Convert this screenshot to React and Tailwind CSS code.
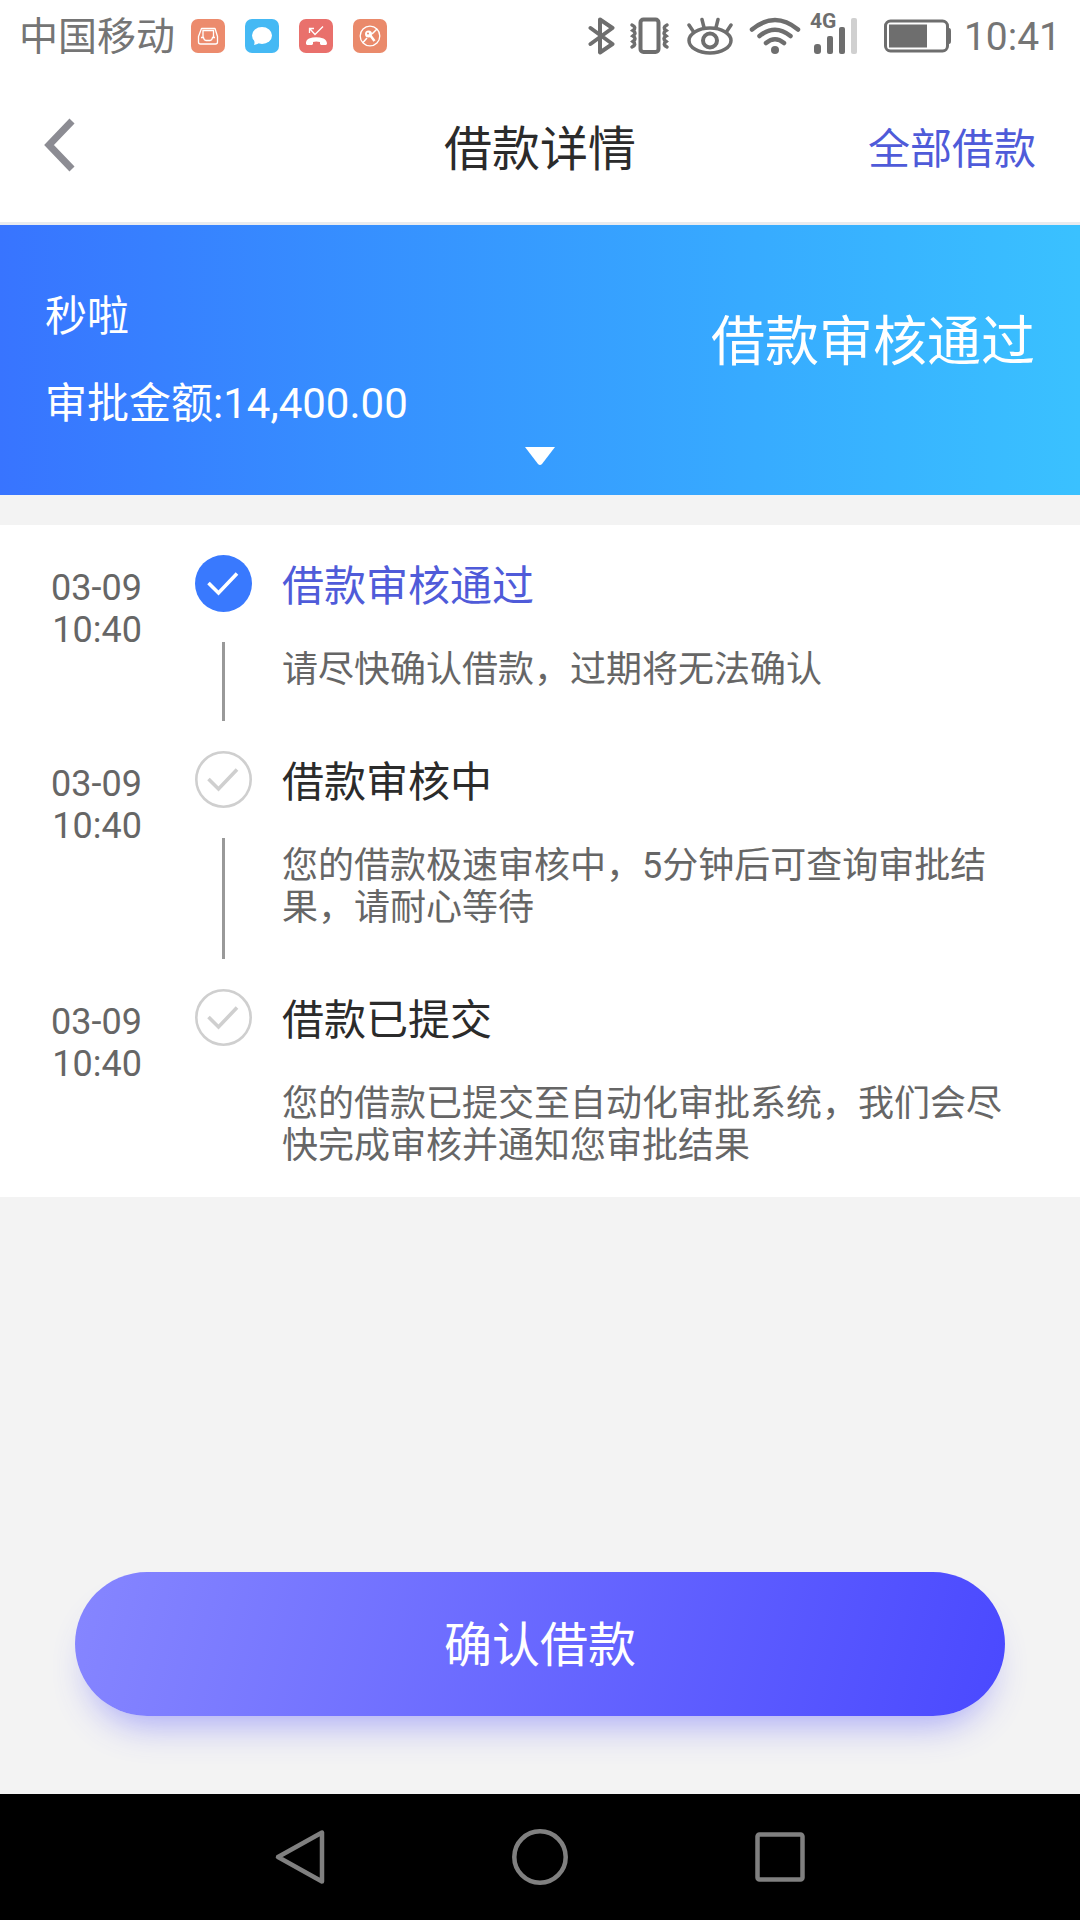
const steps = [
  {
    date: "03-09",
    time: "10:40",
    title: "借款审核通过",
    text: "请尽快确认借款，过期将无法确认",
    active: true,
  },
  {
    date: "03-09",
    time: "10:40",
    title: "借款审核中",
    text: "您的借款极速审核中，5分钟后可查询审批结果，请耐心等待",
  },
  {
    date: "03-09",
    time: "10:40",
    title: "借款已提交",
    text: "您的借款已提交至自动化审批系统，我们会尽快完成审核并通知您审批结果",
  },
];

function NoticeIcons() {
  return (
    <div className="ml-4 flex gap-5">
      {/* Inbox */}
      <svg width="34" height="34" viewBox="0 0 34 34" fill="none">
        <rect width="34" height="34" rx="7" fill="#ec8b6d" />
        <path d="M10.5 9.500h13.500l2.500 8v5.500q0 2-2 2h-15q-2 0-2-2v-5.500z" stroke="#fff" strokeWidth="1.3" strokeLinejoin="round" />
        <path d="M12 18v-6.500h10.500V18M10 18.500h2.500q.5 3 2.500 3h4q2 0 2.500-3H24" stroke="#fff" strokeWidth="1.3" />
      </svg>
      {/* Message */}
      <svg width="34" height="34" viewBox="0 0 34 34">
        <rect width="34" height="34" rx="7" fill="#45b9f4" />
        <ellipse cx="17" cy="16.5" rx="10" ry="8.5" fill="#fff" />
        <path d="M9 20q1 4 0 6 4-.5 6-3z" fill="#fff" />
      </svg>
      {/* Missed call */}
      <svg width="34" height="34" viewBox="0 0 34 34" fill="none">
        <rect width="34" height="34" rx="7" fill="#e9706c" />
        <path d="M10.5 14V9.500H15M11 10l5 5.500 8-8" stroke="#fff" strokeWidth="1.3" />
        <path d="M7 25q-.5-4 3-5.500 7-2.500 14.500 0 3.500 1.500 3.500 5.500l-1 1h-5l-1-1v-2q-4-1.200-7 0v2l-1 1H8z" fill="#fff" />
      </svg>
      {/* Blocked */}
      <svg width="34" height="34" viewBox="0 0 34 34" fill="none">
        <rect width="34" height="34" rx="7" fill="#ea8a6b" />
        <circle cx="17" cy="17" r="9.8" stroke="#fff" strokeWidth="1.3" />
        <circle cx="15.5" cy="15" r="3.5" fill="#fff" />
        <path d="M17 16l4.500 6" stroke="#fff" strokeWidth="2.5" />
        <path d="M24 10l-5 5M14 19l-4 4.500" stroke="#fff" strokeWidth="1.5" />
        <circle cx="15" cy="14.5" r="1" fill="#ea8a6b" />
      </svg>
    </div>
  );
}

function StatusBar() {
  return (
    <div className="flex h-[72px] items-center px-[19px] text-[39px] leading-[44px] text-[#757575]">
      <span className="pt-px">中国移动</span>
      <NoticeIcons />
      <div className="ml-auto flex items-center">
        {/* Bluetooth */}
        <svg width="28" height="38" viewBox="0 0 28 38" fill="none" stroke="#6e6e6e" strokeWidth="4" strokeLinecap="round" strokeLinejoin="round">
          <path d="M2.5 11l22 16L12 35.500V2.500L24.500 11l-22 16" />
        </svg>
        {/* Vibrate */}
        <svg className="ml-[13px]" width="42" height="38" viewBox="0 0 42 38" fill="none" stroke="#6e6e6e" strokeLinecap="round">
          <rect x="11.5" y="2.5" width="18" height="32.5" rx="3" strokeWidth="4" />
          <path d="M3 8q5 2.500 1 5.500q4 2.500 0 5.500q4 2.500 0 5.500q4 3-1 5.500M38 8q-5 2.500-1 5.500q-4 2.500 0 5.500q-4 2.500 0 5.500q-4 3 1 5.500" strokeWidth="3.5" />
        </svg>
        {/* Eye comfort */}
        <svg className="ml-4" width="46" height="38" viewBox="0 0 46 38" fill="none" stroke="#6e6e6e" strokeWidth="3.5" strokeLinecap="round">
          <ellipse cx="23" cy="23.5" rx="21" ry="12.5" />
          <circle cx="23" cy="23.5" r="7" strokeWidth="4" />
          <path d="M2 8l4 6M15 2.500l2 8M31 2.500l-2 8M44 8l-4 6" />
        </svg>
        {/* Wifi */}
        <svg className="ml-4" width="52" height="38" viewBox="0 0 52 38" fill="none" stroke="#6e6e6e" strokeWidth="4.5" strokeLinecap="round">
          <path d="M3 12.500Q26-6.500 49 12.500M10.500 19Q26 6.500 41.500 19M17 26Q26 18.500 35 26" />
          <circle cx="26" cy="33" r="4" fill="#6e6e6e" stroke="none" />
        </svg>
        {/* Mobile signal */}
        <div className="relative ml-[13px]">
          <span className="absolute -top-2 -left-1 text-[21px] leading-6 font-bold text-[#6e6e6e]">4G</span>
          <svg width="44" height="38" viewBox="0 0 44 38" fill="#6e6e6e">
            <rect x="0" y="27" width="7" height="10" rx="3" />
            <rect x="13" y="19" width="6" height="18" rx="2" />
            <rect x="25" y="10" width="6" height="27" rx="2" />
            <rect x="37" y="1" width="6" height="36" rx="2" fill="#d0d0d0" />
          </svg>
        </div>
        {/* Battery */}
        <svg className="ml-[26px]" width="68" height="34" viewBox="0 0 68 34">
          <rect x="1.5" y="2" width="62" height="30" rx="5" fill="none" stroke="#6e6e6e" strokeWidth="3" />
          <rect x="5" y="5.5" width="38" height="23" fill="#6e6e6e" />
          <path d="M63 9h2q2 0 2 3v10q0 3-2 3h-2z" fill="#6e6e6e" />
        </svg>
        <span className="ml-3 pt-px">10:41</span>
      </div>
    </div>
  );
}

function StepIcon({ active }) {
  return (
    <svg
      width="57"
      height="57"
      viewBox="0 0 57 57"
      fill="none"
      className={active ? "shrink-0 text-white" : "shrink-0 text-[#cfcfcf]"}
    >
      {active ? (
        <circle cx="28.5" cy="28.5" r="28.5" fill="#3979fe" />
      ) : (
        <circle cx="28.5" cy="28.5" r="27.2" stroke="currentColor" strokeWidth="2.6" />
      )}
      <path d="M13.500 28l10 10 18.500-19.500" stroke="currentColor" strokeWidth="3.6" />
    </svg>
  );
}

function Step({ step, last }) {
  return (
    <li className="flex">
      <div className="w-[142px] shrink-0 pt-3 text-right text-[36px] leading-[42px] text-[#666]">
        <div>{step.date}</div>
        <div>{step.time}</div>
      </div>
      <div className="mr-[30px] ml-[53px] flex w-[57px] shrink-0 flex-col items-center">
        <StepIcon active={step.active} />
        {!last && <div className="my-[30px] w-[3px] flex-1 bg-[#999]" />}
      </div>
      <div className={last ? "flex-1 pt-2" : "flex-1 pt-2 pb-15"}>
        <h2 className={`text-[42px] leading-12 ${step.active ? "text-[#4f5bd9]" : "text-[#2b2b2b]"}`}>
          {step.title}
        </h2>
        <p className="mt-[38px] text-[36px] leading-[42px] text-[#666]">{step.text}</p>
      </div>
    </li>
  );
}

export default function App() {
  return (
    <div
      lang="zh-CN"
      className="flex min-h-screen flex-col bg-[#f3f3f3] font-['Roboto','Noto_Sans_CJK_SC',sans-serif]"
    >
      <div className="border-b-3 border-[#e9ebef] bg-white">
        <StatusBar />
        <header className="grid h-[150px] grid-cols-3 items-center px-[44px]">
          <button type="button" aria-label="返回" className="-mt-1 justify-self-start">
            <svg width="32" height="54" viewBox="0 0 32 54" fill="none" stroke="#8c8c93" strokeWidth="7">
              <path d="M28 3L5 27l23 24" />
            </svg>
          </button>
          <h1 className="pt-1.5 text-center text-[48px] leading-[56px] text-[#2b2b2b]">借款详情</h1>
          <a href="#all" className="pt-1.5 text-right text-[42px] leading-12 text-[#4f5bd9]">
            全部借款
          </a>
        </header>
      </div>

      <section className="bg-linear-to-r from-[#3874ff] to-[#3ac1ff] px-[45px] pt-[68px] pb-[30px] text-white">
        <div className="flex items-start justify-between">
          <div className="flex flex-col gap-[39px] text-[42px] leading-12">
            <p>秒啦</p>
            <p>审批金额:14,400.00</p>
          </div>
          <p className="pt-5 text-[54px] leading-[60px]">借款审核通过</p>
        </div>
        <button type="button" aria-label="展开" className="mx-auto mt-[19px] block">
          <svg className="block" width="30" height="18" viewBox="0 0 30 18" fill="#fff">
            <path d="M0 0h30L17 17q-2 2-4 0z" />
          </svg>
        </button>
      </section>

      <ol className="mt-[30px] bg-white py-[30px] pr-[66px]">
        {steps.map((step, i) => (
          <Step key={step.title} step={step} last={i === steps.length - 1} />
        ))}
      </ol>

      <div className="mt-auto px-[75px] pb-[78px]">
        <button
          type="button"
          className="h-36 w-full rounded-full bg-linear-[105deg,#8686ff,#4a49ff] pt-1 text-[48px] text-white shadow-[0_24px_36px_-16px_rgba(75,75,255,0.45)]"
        >
          确认借款
        </button>
      </div>

      <nav className="bg-black">
        <div className="mx-auto grid h-[126px] w-2/3 grid-cols-3 place-items-center">
          <button type="button" aria-label="Back">
            <svg width="56" height="56" viewBox="0 0 56 56" fill="none" stroke="#808080" strokeWidth="4.5" strokeLinejoin="round">
              <path d="M50 3.500v49L6 28z" />
            </svg>
          </button>
          <button type="button" aria-label="Home">
            <svg width="56" height="56" viewBox="0 0 56 56" fill="none" stroke="#808080" strokeWidth="4.5">
              <circle cx="28" cy="28" r="25.7" />
            </svg>
          </button>
          <button type="button" aria-label="Recent apps">
            <svg width="56" height="56" viewBox="0 0 56 56" fill="none" stroke="#808080" strokeWidth="4.5">
              <rect x="5.5" y="5.5" width="45" height="45" rx="2" />
            </svg>
          </button>
        </div>
      </nav>
    </div>
  );
}
